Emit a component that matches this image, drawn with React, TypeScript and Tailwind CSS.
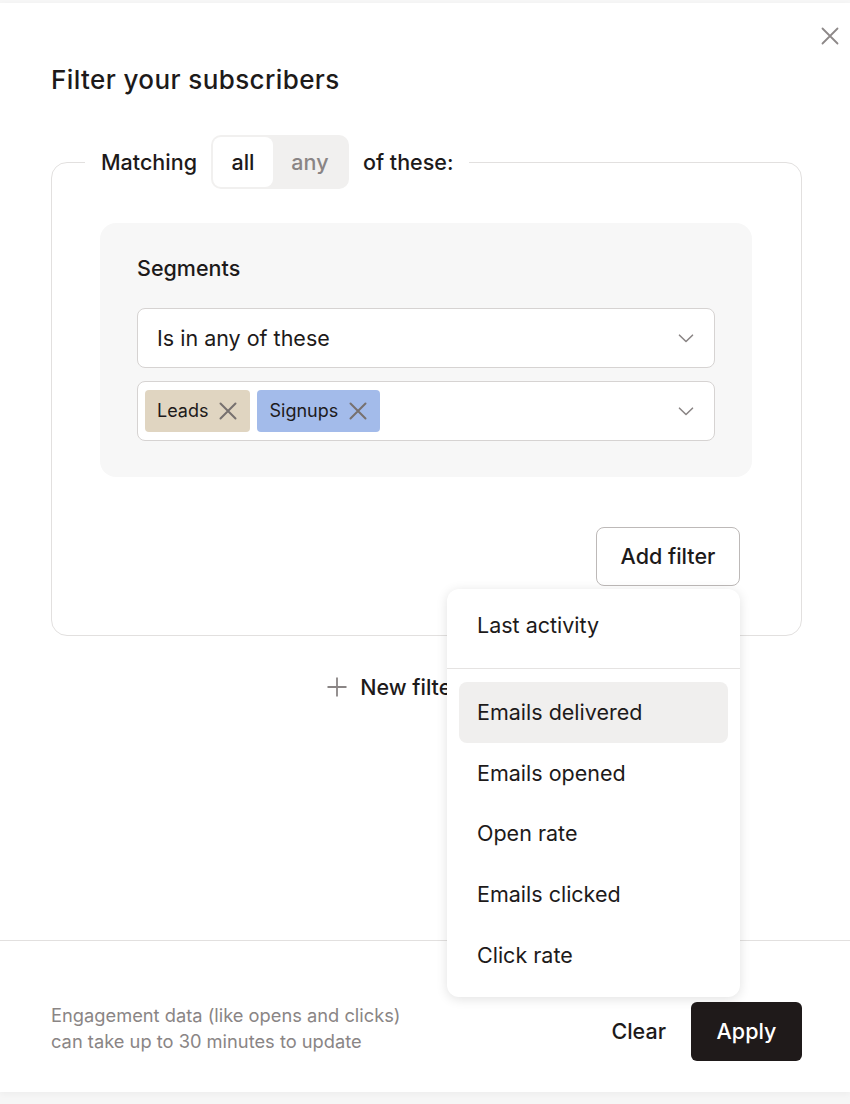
import React from "react";

const font = { fontFamily: 'Inter, "Noto Sans", sans-serif' };

function Chevron() {
  return (
    <svg width="16" height="9" viewBox="0 0 16 9" fill="none" className="shrink-0">
      <path d="M1.5 1.2 L8 7.5 L14.5 1.2" stroke="#8a8585" strokeWidth="1.6" strokeLinecap="round" strokeLinejoin="round" />
    </svg>
  );
}

function XIcon({ size = 18, color = "#77716f", sw = 2 }: { size?: number; color?: string; sw?: number }) {
  return (
    <svg width={size} height={size} viewBox="0 0 18 18" fill="none" className="shrink-0">
      <path d="M1.5 1.5 L16.5 16.5 M16.5 1.5 L1.5 16.5" stroke={color} strokeWidth={sw} strokeLinecap="round" />
    </svg>
  );
}

function Chip({ label, bg }: { label: string; bg: string }) {
  return (
    <div className={`flex h-[42px] items-center gap-[11px] rounded-[4px] pl-[12px] pr-[13px] ${bg}`}>
      <span className="text-[18px] leading-none text-[#1d1a1a]">{label}</span>
      <XIcon size={18} />
    </div>
  );
}

export default function App() {
  const items = ["Emails delivered", "Emails opened", "Open rate", "Emails clicked", "Click rate"];
  return (
    <div className="min-h-[1104px] bg-[#f6f6f6] pt-[3px] antialiased" style={font}>
      <div className="relative flex h-[1089px] flex-col bg-white shadow-[0_2px_6px_rgba(0,0,0,0.04)]">
        <button className="absolute right-[11px] top-[24px] flex h-[18px] w-[18px] items-center justify-center">
          <XIcon size={18} color="#8d8888" sw={1.8} />
        </button>

        <div className="pl-[51px] pr-[48px] pt-[61px]">
          <h1 className="text-[26px] font-medium leading-[32px] tracking-[0.4px] text-[#1d1a1a]">
            Filter your subscribers
          </h1>

          <fieldset className="mt-[39px] rounded-[16px] border border-[#e2e0df] pb-[49px] pl-12 pr-[49px] pt-[34px]">
            <legend className="-ml-[15px] px-[16px]">
              <div className="flex items-center gap-[14px] text-[21.5px] font-medium text-[#1d1a1a]">
                <span>Matching</span>
                <div className="flex h-[54px] items-center rounded-[10px] bg-[#f1f0ef] p-[2px]">
                  <div className="flex h-[50px] w-[60px] items-center justify-center rounded-[8px] bg-white font-medium text-[#1d1a1a]">
                    all
                  </div>
                  <div className="flex h-[50px] w-[74px] items-center justify-center font-medium text-[#8a8585]">
                    any
                  </div>
                </div>
                <span>of these:</span>
              </div>
            </legend>

            <div className="rounded-[16px] bg-[#f7f7f7] px-[37px] pb-[36px] pt-[31px]">
              <div className="text-[21.5px] font-medium leading-[28px] text-[#1d1a1a]">Segments</div>
              <div className="mt-[26px] flex h-[60px] items-center justify-between rounded-[8px] border border-[#d6d3d2] bg-white pl-[19px] pr-[20px]">
                <span className="text-[21.5px] text-[#1d1a1a]">Is in any of these</span>
                <Chevron />
              </div>
              <div className="mt-[13px] flex h-[60px] items-center justify-between rounded-[8px] border border-[#d6d3d2] bg-white pl-[7px] pr-[20px]">
                <div className="flex items-center gap-[7px]">
                  <Chip label="Leads" bg="bg-[#e0d5c1]" />
                  <Chip label="Signups" bg="bg-[#a3bbea]" />
                </div>
                <Chevron />
              </div>
            </div>

            <div className="mt-[50px] flex justify-end pr-3">
              <div className="relative">
                <button className="flex h-[59px] w-[144px] items-center justify-center rounded-[8px] border border-[#bdb9b8] bg-white text-[21.5px] font-medium text-[#1d1a1a]">
                  Add filter
                </button>
                <div className="absolute right-0 top-[62px] z-10 w-[293px] rounded-[12px] bg-white shadow-[0_2px_12px_rgba(0,0,0,0.12)]">
                  <div className="px-[12px] pb-[13px] pt-[6px]">
                    <div className="flex h-[60px] items-center px-[18px] text-[21.5px] text-[#1d1a1a]">Last activity</div>
                  </div>
                  <div className="h-px bg-[#e5e3e2]" />
                  <div className="px-[12px] pb-[12px] pt-[13px]">
                    {items.map((t, i) => (
                      <div
                        key={t}
                        className={`flex h-[60.6px] items-center rounded-[8px] px-[18px] text-[21.5px] text-[#1d1a1a] ${i === 0 ? "bg-[#f0efee]" : ""}`}
                      >
                        {t}
                      </div>
                    ))}
                  </div>
                </div>
              </div>
            </div>
          </fieldset>

          <div className="mt-[37px] flex h-[28px] items-center justify-center gap-[13px] text-[21.5px] font-medium text-[#1d1a1a]">
            <svg width="20" height="20" viewBox="0 0 20 20" fill="none">
              <path d="M10 0.5 V19.5 M0.5 10 H19.5" stroke="#8a8585" strokeWidth="1.8" />
            </svg>
            <span>New filter group</span>
          </div>
        </div>

        <div className="mt-auto border-t border-[#e2e0df] pb-[31px] pl-[51px] pr-[48px] pt-[61px]">
          <div className="flex items-start justify-between">
            <p className="text-[18.3px] leading-[26px] text-[#8a8585]">
              Engagement data (like opens and clicks)
              <br />
              can take up to 30 minutes to update
            </p>
            <div className="flex items-center gap-[25px]">
              <button className="text-[21.5px] font-medium text-[#1d1a1a]">Clear</button>
              <button className="flex h-[59px] w-[111px] items-center justify-center rounded-[6px] bg-[#1f1a1a] text-[21.5px] font-medium text-white">
                Apply
              </button>
            </div>
          </div>
        </div>
      </div>
    </div>
  );
}
